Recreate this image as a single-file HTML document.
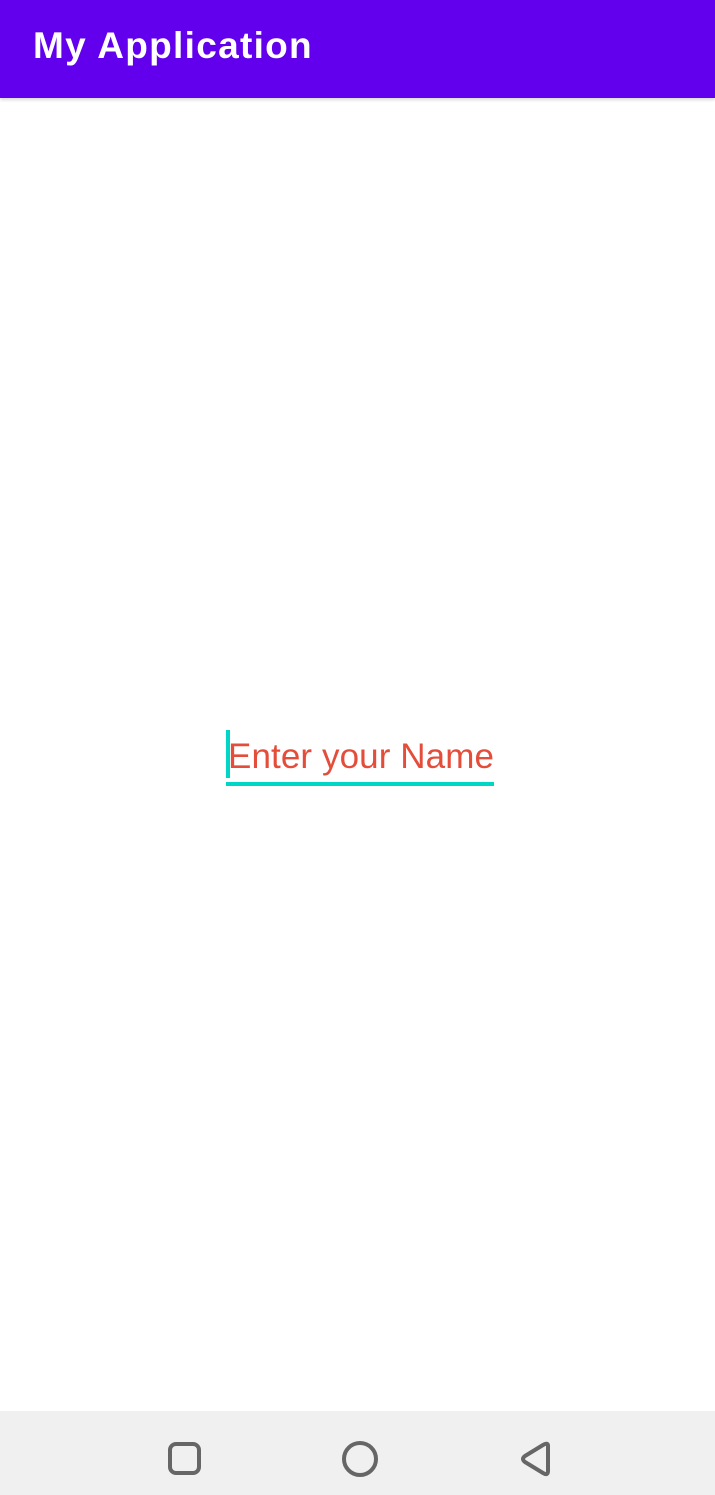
<!DOCTYPE html>
<html><head><style>
body{margin:0;width:715px;height:1495px;position:relative;background:#fff;font-family:"Liberation Sans",sans-serif;overflow:hidden}
.bar{position:absolute;left:0;top:0;width:715px;height:98px;background:#6200ee;box-shadow:0 2px 3px rgba(0,0,0,.15)}
.bar span{position:absolute;left:33px;top:25px;color:#fff;font-size:37px;font-weight:bold;letter-spacing:1.3px}
.cur{position:absolute;left:226px;top:730px;width:4px;height:48px;background:#00d6c6}
.ul{position:absolute;left:226px;top:782px;width:268px;height:4px;background:#00d6c6}
.txt{position:absolute;left:228px;top:737px;font-size:35px;color:#e44d3a;white-space:nowrap;letter-spacing:0.1px}
.nav{position:absolute;left:0;top:1411px;width:715px;height:84px;background:#f0f0f0}
</style></head><body>
<div class="bar"><span>My Application</span></div>
<div class="cur"></div>
<div class="txt">Enter your Name</div>
<div class="ul"></div>
<div class="nav">
<svg width="715" height="84" style="position:absolute;left:0;top:0">
<g fill="none" stroke="#666" stroke-width="4">
<rect x="170" y="33" width="29" height="29" rx="6"/>
<circle cx="360" cy="48" r="16"/>
<path d="M548 35 L548 60 Q548 65 543 62 L525 51 Q521 48 525 45 L543 34 Q548 31 548 35 Z" stroke-linejoin="round"/>
</g></svg>
</div>
</body></html>
